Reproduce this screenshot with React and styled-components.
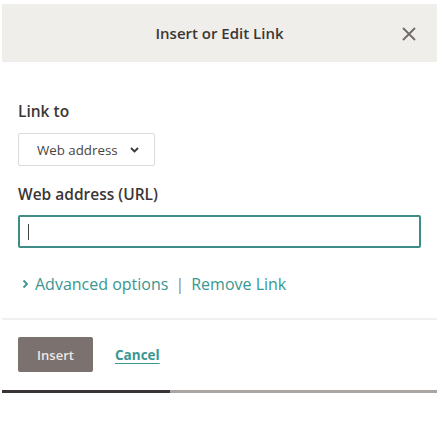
import React from 'react';
import styled, {createGlobalStyle} from "styled-components";

const GlobalStyle = createGlobalStyle`
    body {
        margin: 0;
        background: #fff;
        font-family: "Open Sans", "Liberation Sans", sans-serif;
    }
`;

const Dialog = styled.div`
    width: 435px;
    margin: 4px 0 0 2px;
    background: #fff;
`;

const Header = styled.div`
    height: 58px;
    background: #efeeeb;
    display: flex;
    align-items: center;
    justify-content: center;
    position: relative;
`;

const Title = styled.h2`
    margin: 0;
    font-size: 15px;
    font-weight: 600;
    color: #3b3634;
`;

const Close = styled.button`
    position: absolute;
    right: 20px;
    top: 22px;
    width: 16px;
    height: 16px;
    padding: 0;
    border: none;
    background: none;
    display: flex;
`;

const Body = styled.div`
    padding: 39px 16px 0 16px;
`;

const Label = styled.div`
    font-size: 15.5px;
    font-weight: 600;
    color: #3b3634;
    line-height: 20px;
    margin-bottom: ${p => p.$gap}px;
`;

const Select = styled.div`
    width: 137px;
    height: 33px;
    box-sizing: border-box;
    border: 1px solid #dddad7;
    border-radius: 2px;
    display: flex;
    align-items: center;
    padding-left: 18px;
    gap: 12px;
    font-size: 13.3px;
    color: #4a4441;
    margin-bottom: 18px;
`;

const Input = styled.div`
    width: 403px;
    height: 33px;
    box-sizing: border-box;
    border: 2px solid #3f8c86;
    border-radius: 2px;
    display: flex;
    align-items: center;
    padding-left: 8px;
`;

const Caret = styled.span`
    width: 1px;
    height: 16px;
    background: #444;
`;

const LinkRow = styled.div`
    display: flex;
    align-items: center;
    margin: 25px 0 0 4px;
    height: 22px;
    font-size: 16px;
    color: #3a9690;
    gap: 6px;
`;

const Sep = styled.span`
    color: #8a8482;
    margin: 0 1px;
`;

const Divider = styled.div`
    height: 2px;
    background: #f1f0ee;
    margin-top: 23px;
`;

const Footer = styled.div`
    display: flex;
    align-items: center;
    gap: 22px;
    padding: 17px 16px 0 16px;
`;

const InsertButton = styled.button`
    width: 75px;
    height: 35px;
    border: none;
    border-radius: 2px;
    background: #7b716e;
    color: #ece8e6;
    font-family: inherit;
    font-size: 13px;
    font-weight: 600;
`;

const Cancel = styled.a`
    font-size: 13.5px;
    font-weight: 700;
    color: #3a9690;
    text-decoration: underline;
    text-underline-offset: 3px;
    text-decoration-thickness: 1px;
`;

const Progress = styled.div`
    margin-top: 18px;
    height: 3px;
    background: #a9a6a4;
    display: flex;
`;

const ProgressFill = styled.div`
    width: 168px;
    background: #3a3534;
`;

function App() {
    return (
        <>
            <GlobalStyle/>
            <Dialog>
                <Header>
                    <Title>Insert or Edit Link</Title>
                    <Close>
                        <svg width="16" height="16" viewBox="0 0 16 16">
                            <path d="M2 2 L14 14 M14 2 L2 14" stroke="#6f6a68" strokeWidth="1.8" fill="none"/>
                        </svg>
                    </Close>
                </Header>
                <Body>
                    <Label $gap={12}>Link to</Label>
                    <Select>
                        Web address
                        <svg width="9" height="6" viewBox="0 0 9 6">
                            <path d="M1 1 L4.5 4.5 L8 1" stroke="#3b3634" strokeWidth="1.8" fill="none"/>
                        </svg>
                    </Select>
                    <Label $gap={11}>Web address (URL)</Label>
                    <Input><Caret/></Input>
                    <LinkRow>
                        <svg width="7" height="10" viewBox="0 0 7 10">
                            <path d="M1.5 1.5 L5 5 L1.5 8.5" stroke="#3a9690" strokeWidth="1.8" fill="none"/>
                        </svg>
                        <span>Advanced options</span>
                        <Sep>|</Sep>
                        <span>Remove Link</span>
                    </LinkRow>
                </Body>
                <Divider/>
                <Footer>
                    <InsertButton>Insert</InsertButton>
                    <Cancel>Cancel</Cancel>
                </Footer>
                <Progress>
                    <ProgressFill/>
                </Progress>
            </Dialog>
        </>
    );
}

export default App;
